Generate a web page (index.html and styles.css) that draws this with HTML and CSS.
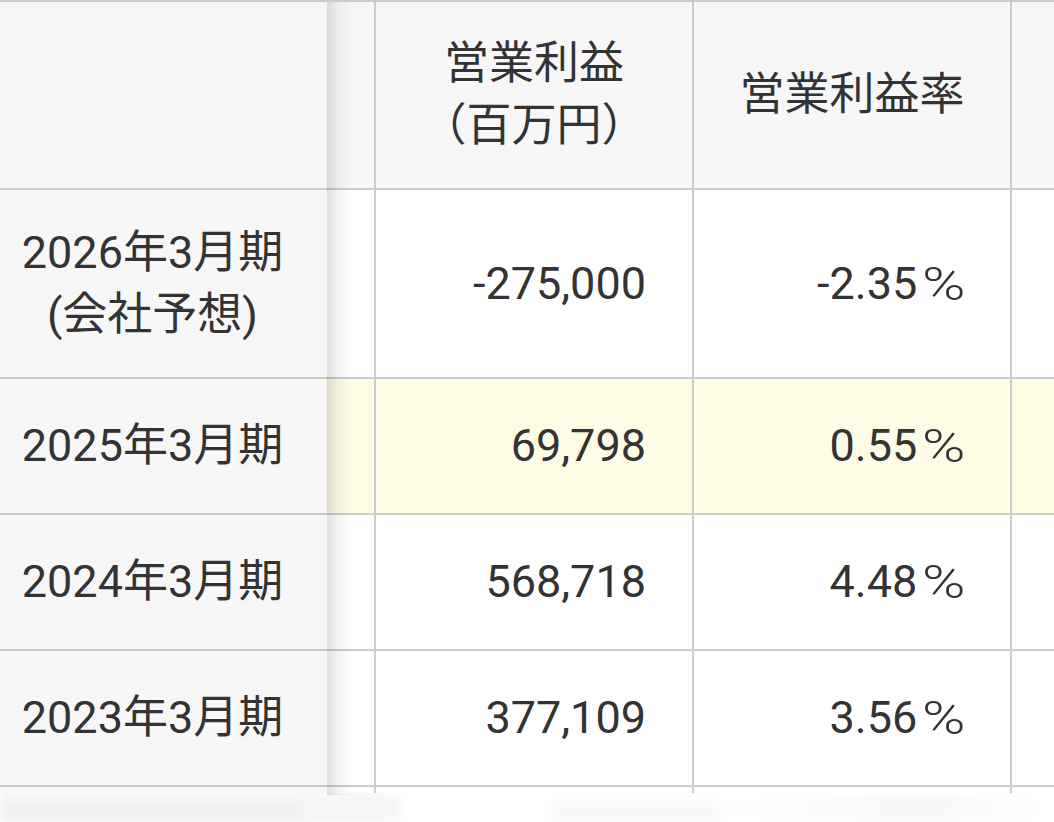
FILE: index.html
```html
<!DOCTYPE html>
<html lang="ja">
<head>
<meta charset="utf-8">
<title>営業利益</title>
<link rel="stylesheet" href="styles.css">
</head>
<body>
<div class="table">
  <div class="row head">
    <div class="cell stub"></div>
    <div class="cell sliver"></div>
    <div class="cell col">営業利益<br>（百万円）</div>
    <div class="cell col">営業利益率</div>
    <div class="cell rest"></div>
  </div>
  <div class="row tall">
    <div class="cell stub">2026年3月期<br>(会社予想)</div>
    <div class="cell sliver"></div>
    <div class="cell col">-275,000</div>
    <div class="cell col">-2.35<span class="pct">%</span></div>
    <div class="cell rest"></div>
  </div>
  <div class="row mark">
    <div class="cell stub">2025年3月期</div>
    <div class="cell sliver"></div>
    <div class="cell col">69,798</div>
    <div class="cell col">0.55<span class="pct">%</span></div>
    <div class="cell rest"></div>
  </div>
  <div class="row">
    <div class="cell stub">2024年3月期</div>
    <div class="cell sliver"></div>
    <div class="cell col">568,718</div>
    <div class="cell col">4.48<span class="pct">%</span></div>
    <div class="cell rest"></div>
  </div>
  <div class="row">
    <div class="cell stub">2023年3月期</div>
    <div class="cell sliver"></div>
    <div class="cell col">377,109</div>
    <div class="cell col">3.56<span class="pct">%</span></div>
    <div class="cell rest"></div>
  </div>
  <div class="row stubend">
    <div class="cell stub"></div>
    <div class="cell sliver"></div>
    <div class="cell col"></div>
    <div class="cell col"></div>
    <div class="cell rest"></div>
  </div>
</div>
<div class="fade">
  <div class="fade-inner">
    <div class="blob b1"></div>
    <div class="blob b2"></div>
    <div class="blob b3"></div>
    <div class="blob b4"></div>
    <div class="blob b5"></div>
  </div>
</div>
</body>
</html>
```
FILE: styles.css
```css
html, body {
  margin: 0;
  padding: 0;
  background: #ffffff;
  overflow: hidden;
}

body {
  font-family: Roboto, "Noto Sans CJK JP", sans-serif;
  font-size: 45px;
  line-height: 62px;
  color: #333333;
}

.pct {
  display: inline-block;
  font-family: Roboto, sans-serif;
  font-size: 47px;
  font-weight: 300;
  margin-left: 5px;
  margin-right: 7px;
  transform: scaleX(1.25);
  transform-origin: left center;
}

.table {
  border-top: 2px solid #cccccc;
}

.row {
  display: flex;
  height: 136px;
}

.row.head { height: 188px; }
.row.tall { height: 189px; }
.row.stubend { height: 6px; }

.cell {
  box-sizing: border-box;
  display: flex;
  align-items: center;
  border-bottom: 2px solid #cccccc;
  background: #ffffff;
}

.stubend .cell { border-bottom: none; }

.stub {
  flex: none;
  width: 327px;
  padding-right: 22px;
  justify-content: center;
  text-align: center;
  background: #f7f7f7;
  position: relative;
  z-index: 1;
}

.stub::after {
  content: "";
  position: absolute;
  left: 100%;
  top: 0;
  bottom: -2px;
  width: 26px;
  background: linear-gradient(to right, rgba(0, 0, 0, 0.13), rgba(0, 0, 0, 0.04) 45%, rgba(0, 0, 0, 0));
  pointer-events: none;
}

.sliver {
  flex: none;
  width: 49px;
  border-right: 2px solid #cccccc;
}

.col {
  flex: none;
  width: 318px;
  border-right: 2px solid #cccccc;
  justify-content: flex-end;
  padding-right: 46px;
  white-space: nowrap;
}

.rest {
  flex: 1;
}

.head .cell {
  background: #f7f7f7;
}

.head .col {
  justify-content: center;
  text-align: center;
  padding-right: 0;
}

.mark .sliver,
.mark .col,
.mark .rest {
  background: #fffce6;
}

.fade {
  height: 29px;
  background: #ffffff;
  overflow: hidden;
}

.fade-inner {
  display: flex;
  height: 100%;
  filter: blur(7px);
}

.blob {
  flex: none;
  height: 100%;
}

.b1 {
  width: 300px;
  background: linear-gradient(to bottom, #f6f6f6, #ebebeb);
}

.b2 {
  width: 100px;
  background: #f5f5f5;
}

.b3 {
  width: 150px;
  background: #ffffff;
}

.b4 {
  width: 170px;
  background: linear-gradient(to bottom, #ffffff, #f3f3f3);
}

.b5 {
  width: 334px;
  background: linear-gradient(to right, #ffffff, #f7f7f7 60%, #ffffff);
}
```
